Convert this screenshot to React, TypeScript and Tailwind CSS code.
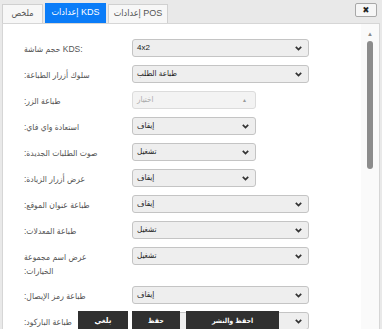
import React from "react";

type Row = {
  label: React.ReactNode;
  value: string;
  wide?: boolean;
  disabled?: boolean;
  ltr?: boolean;
};

const rows: Row[] = [
  { label: "حجم شاشة KDS:", value: "4x2", wide: true, ltr: true },
  { label: "سلوك أزرار الطباعة:", value: "طباعة الطلب", wide: true },
  { label: "طباعة الزر:", value: "اختيار", disabled: true },
  { label: "استعادة واي فاي:", value: "إيقاف" },
  { label: "صوت الطلبات الجديدة:", value: "تشغيل" },
  { label: "عرض أزرار الزيادة:", value: "إيقاف" },
  { label: "طباعة عنوان الموقع:", value: "إيقاف", wide: true },
  { label: "طباعة المعدلات:", value: "تشغيل", wide: true },
  {
    label: (
      <>
        عرض اسم مجموعة
        <br />
        الخيارات:
      </>
    ),
    value: "تشغيل",
    wide: true,
  },
  { label: "طباعة رمز الإيصال:", value: "إيقاف", wide: true },
  { label: "طباعة الباركود:", value: "إيقاف", wide: true },
];

const Chevron = () => (
  <svg width="7" height="5" viewBox="0 0 7 5" className="shrink-0">
    <polyline points="0.8,0.8 3.5,3.6 6.2,0.8" fill="none" stroke="#333" strokeWidth="1.7" />
  </svg>
);

const Select = ({ row }: { row: Row }) => (
  <div
    className={`flex h-[18px] items-center justify-between rounded-[3px] border pl-[4px] pr-[6px] ${
      row.wide ? "w-[177px]" : "w-[124px]"
    } ${row.disabled ? "border-[#dcdcdc] bg-[#f3f3f3]" : "border-[#c4c4c4] bg-[#eeeeee]"}`}
  >
    <span className={`text-[8px] leading-none ${row.disabled ? "text-[#aaaaaa]" : "text-[#222]"}`}>
      {row.value}
    </span>
    {row.disabled ? (
      <span className="mr-[2px] text-[5px] leading-none text-[#999]">▲</span>
    ) : (
      <Chevron />
    )}
  </div>
);

export default function App() {
  return (
    <div
      className="relative h-[329px] w-[382px] overflow-hidden bg-[#e9e9e9]"
      style={{ fontFamily: '"Liberation Sans", "DejaVu Sans Condensed", "DejaVu Sans", sans-serif' }}
    >
      {/* header: tabs + close */}
      <div className="flex h-[23px] items-end pl-[2px]">
        <div className="flex items-end gap-[2px]">
          <div className="flex h-[19px] w-[41px] items-center justify-center whitespace-nowrap border border-b-0 border-[#d0d0d0] bg-[#f7f7f7] text-[9px] text-[#555]">
            ملخص
          </div>
          <div className="flex h-[20px] w-[61px] items-center justify-center whitespace-nowrap bg-[#0a7cf8] text-[9px] text-white">
            إعدادات KDS
          </div>
          <div className="flex h-[19px] w-[60px] items-center justify-center whitespace-nowrap border border-b-0 border-[#d0d0d0] bg-[#f7f7f7] text-[9px] text-[#555]">
            إعدادات POS
          </div>
        </div>
        <div className="ml-auto mr-[5px] mt-[3px] flex h-[14px] w-[22px] items-center justify-center self-start rounded-[2px] border border-[#a8a8a8] bg-[#f6f6f6] text-[9px] font-bold leading-none text-[#222]">
          ✖
        </div>
      </div>

      {/* panel */}
      <div className="ml-[2px] mr-[2px] flex h-[310px] border border-[#d6d6d6] bg-white">
        <div className="flex flex-1 flex-col gap-[8px] pl-[21px] pt-[15px]">
          {rows.map((row, i) => (
            <div key={i} className="flex items-start">
              <div
                dir={row.ltr ? "ltr" : "rtl"}
                className="w-[108px] whitespace-nowrap pt-[3px] text-left text-[8.5px] leading-[14px] text-[#555]"
              >
                {row.label}
              </div>
              <Select row={row} />
            </div>
          ))}
        </div>
        <div className="flex w-[18px] flex-col items-center bg-[#fafafa] pt-[7px]">
          <span className="text-[6px] leading-none text-[#888]">▲</span>
          <div className="mt-[4px] h-[128px] w-[6px] rounded-[3px] bg-[#8c8c8c]" />
        </div>
      </div>

      {/* footer buttons */}
      <div className="absolute left-[78px] top-[311px] flex h-[20px] w-[50px] items-center justify-center bg-[#303030] text-[8px] font-bold text-white">
        بلغي
      </div>
      <div className="absolute left-[132px] top-[311px] flex h-[20px] w-[48px] items-center justify-center bg-[#303030] text-[7px] font-bold text-white">
        حفظ
      </div>
      <div className="absolute left-[186px] top-[311px] flex h-[20px] w-[93px] items-center justify-center bg-[#303030] text-[7px] font-bold text-white">
        احفظ والنشر
      </div>
    </div>
  );
}
